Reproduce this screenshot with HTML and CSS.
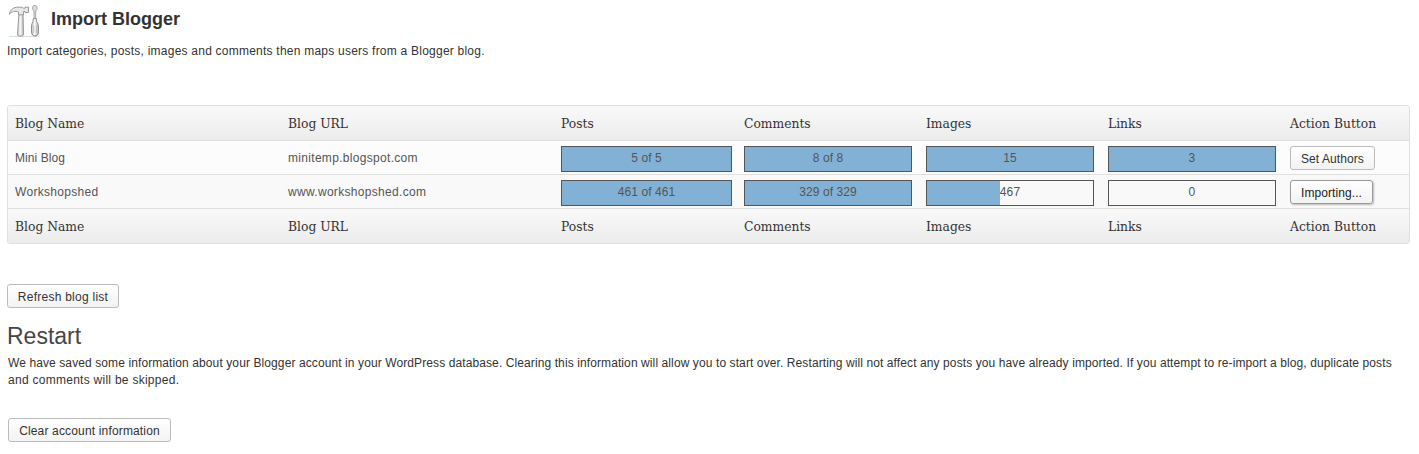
FILE: index.html
```html
<!DOCTYPE html>
<html lang="en">
<head>
<meta charset="utf-8">
<title>Import Blogger</title>
<link rel="stylesheet" href="styles.css">
</head>
<body>
<main class="wrap">
  <header class="page-head">
    <svg class="tools-icon" width="32" height="34" viewBox="0 0 32 34" aria-hidden="true">
      <defs>
        <linearGradient id="metal" x1="0" x2="1" y1="0" y2="0">
          <stop offset="0" stop-color="#c4c4c4"/><stop offset=".45" stop-color="#fafafa"/><stop offset="1" stop-color="#b5b5b5"/>
        </linearGradient>
      </defs>
      <path d="M1 32.500H31" stroke="#ddd"/>
      <path d="M11 9.500H15L15.500 30Q15.500 32 13.500 32H11.500Q9.300 32 9.500 30Z" fill="url(#metal)" stroke="#999"/>
      <path d="M1.300 10.300C2 6.500 4.500 3.800 8.500 3.200H14C15 4.200 16 4.400 17 4.200V3.200H20.500V8.500H17V7.500H15.500V10.800H10.500V8C7 6.500 4 7.500 1.300 10.300Z" fill="#e8e8e8" stroke="#999"/>
      <path d="M26 14.500V7L24.700 5.500V2.500L26 1.500H27.700L29 2.500V5.500L27.700 7V14.500" fill="#ddd" stroke="#a8a8a8"/>
      <path d="M25.300 14.500H28.300L28.600 17.500Q30.500 20 30.500 23V28Q30.500 32 27 32Q23.500 32 23.500 28V23Q23.500 20 25 17.500Z" fill="url(#metal)" stroke="#8f8f8f"/>
      <path d="M25.700 21.500V29M28.400 21.500V29" stroke="#c0c0c0"/>
    </svg>
    <h1 class="page-title">Import Blogger</h1>
  </header>
  <p class="intro">Import categories, posts, images and comments then maps users from a Blogger blog.</p>

  <section class="blogs">
    <div class="row row-head"><span>Blog Name</span><span>Blog URL</span><span>Posts</span><span>Comments</span><span>Images</span><span>Links</span><span>Action Button</span></div>
    <div class="row row-blog">
      <span class="name-short">Mini Blog</span><span>minitemp.blogspot.com</span>
      <div class="bar"><i class="fill" style="width:100%"></i><b>5 of 5</b></div>
      <div class="bar"><i class="fill" style="width:100%"></i><b>8 of 8</b></div>
      <div class="bar"><i class="fill" style="width:100%"></i><b>15</b></div>
      <div class="bar"><i class="fill" style="width:100%"></i><b>3</b></div>
      <button class="btn btn-authors">Set Authors</button>
    </div>
    <div class="row row-blog row-alt">
      <span>Workshopshed</span><span>www.workshopshed.com</span>
      <div class="bar"><i class="fill" style="width:100%"></i><b>461 of 461</b></div>
      <div class="bar"><i class="fill" style="width:100%"></i><b>329 of 329</b></div>
      <div class="bar"><i class="fill" style="width:44%"></i><b>467</b></div>
      <div class="bar"><i class="fill" style="width:0"></i><b>0</b></div>
      <button class="btn btn-active">Importing...</button>
    </div>
    <div class="row row-head row-foot"><span>Blog Name</span><span>Blog URL</span><span>Posts</span><span>Comments</span><span>Images</span><span>Links</span><span>Action Button</span></div>
  </section>

  <button class="btn btn-refresh">Refresh blog list</button>
  <h2 class="restart-title">Restart</h2>
  <p class="restart-text">We have saved some information about your Blogger account in your WordPress database. Clearing this information will allow you to start over. Restarting will not affect any posts you have already imported. If you attempt to re-import a blog, duplicate posts<br><span class="restart-end">and comments will be skipped.</span></p>
  <button class="btn btn-clear">Clear account information</button>
</main>
</body>
</html>
```
FILE: styles.css
```css
* { box-sizing: border-box; }
body {
  margin: 0;
  background: #fff;
  color: #333;
  font: 12px/17px "Liberation Sans", Arial, sans-serif;
}
h1, h2, p { margin: 0; }
.wrap { display: flex; flex-direction: column; align-items: flex-start; padding: 4px 9px 0 7px; height: 454px; overflow: hidden; }
.page-head { display: flex; height: 39px; }
.tools-icon { display: block; margin-left: 1px; }
.page-title { margin-left: 11px; font-size: 18px; line-height: 30px; font-weight: bold; white-space: nowrap; }
.intro { white-space: nowrap; letter-spacing: .23px; }
.blogs { width: 1403px; margin-top: 45px; border: 1px solid #dfdfdf; border-radius: 3px; overflow: hidden; }
.row { display: grid; grid-template-columns: 273px 273px 183px 182px 182px 182px 1fr; padding-left: 7px; border-bottom: 1px solid #dfdfdf; white-space: nowrap; }
.row-head { height: 35px; background: linear-gradient(#f9f9f9, #ececec); font: 13.7px/34px "DejaVu Serif Condensed", "DejaVu Serif", serif; }
.row-blog { height: 34px; background: #fcfcfc; color: #555; line-height: 35px; }
.row-blog > span { letter-spacing: .31px; height: 33px; }
.row-blog > .name-short { letter-spacing: .08px; }
.row-alt { background: #f9f9f9; }
.row-foot { height: 34px; border-bottom: 0; }
.bar { display: grid; height: 26px; width: 168px; margin-top: 5px; border: 1px solid #555; line-height: 23px; text-align: center; }
.bar:nth-child(3) { width: 171px; }
.bar > * { grid-area: 1 / 1; }
.bar b { font-weight: normal; letter-spacing: .1px; }
.fill { background: #83b1d6; }
.btn {
  height: 24px;
  padding: 1px 0 0;
  border: 1px solid #bbb;
  border-radius: 3px;
  background: linear-gradient(#fff, #f3f3f3);
  color: #333;
  font: 12px/22px "Liberation Sans", Arial, sans-serif;
  text-align: center;
  white-space: nowrap;
}
.btn-authors { width: 85px; margin-top: 5px; letter-spacing: .08px; }
.btn-active { width: 83px; margin-top: 5px; border-color: #999; box-shadow: 1px 1px 2px rgba(0, 0, 0, .25); color: #222; letter-spacing: .08px; }
.btn-refresh { width: 112px; margin-top: 40px; letter-spacing: .25px; }
.restart-title { margin-top: 13px; font-size: 23px; line-height: 30px; font-weight: normal; color: #464646; }
.restart-text { margin: 4px 0 0 1px; white-space: nowrap; letter-spacing: .1px; }
.restart-end { letter-spacing: .27px; }
.btn-clear { width: 163px; margin: 29px 0 0 1px; letter-spacing: .16px; }
```
